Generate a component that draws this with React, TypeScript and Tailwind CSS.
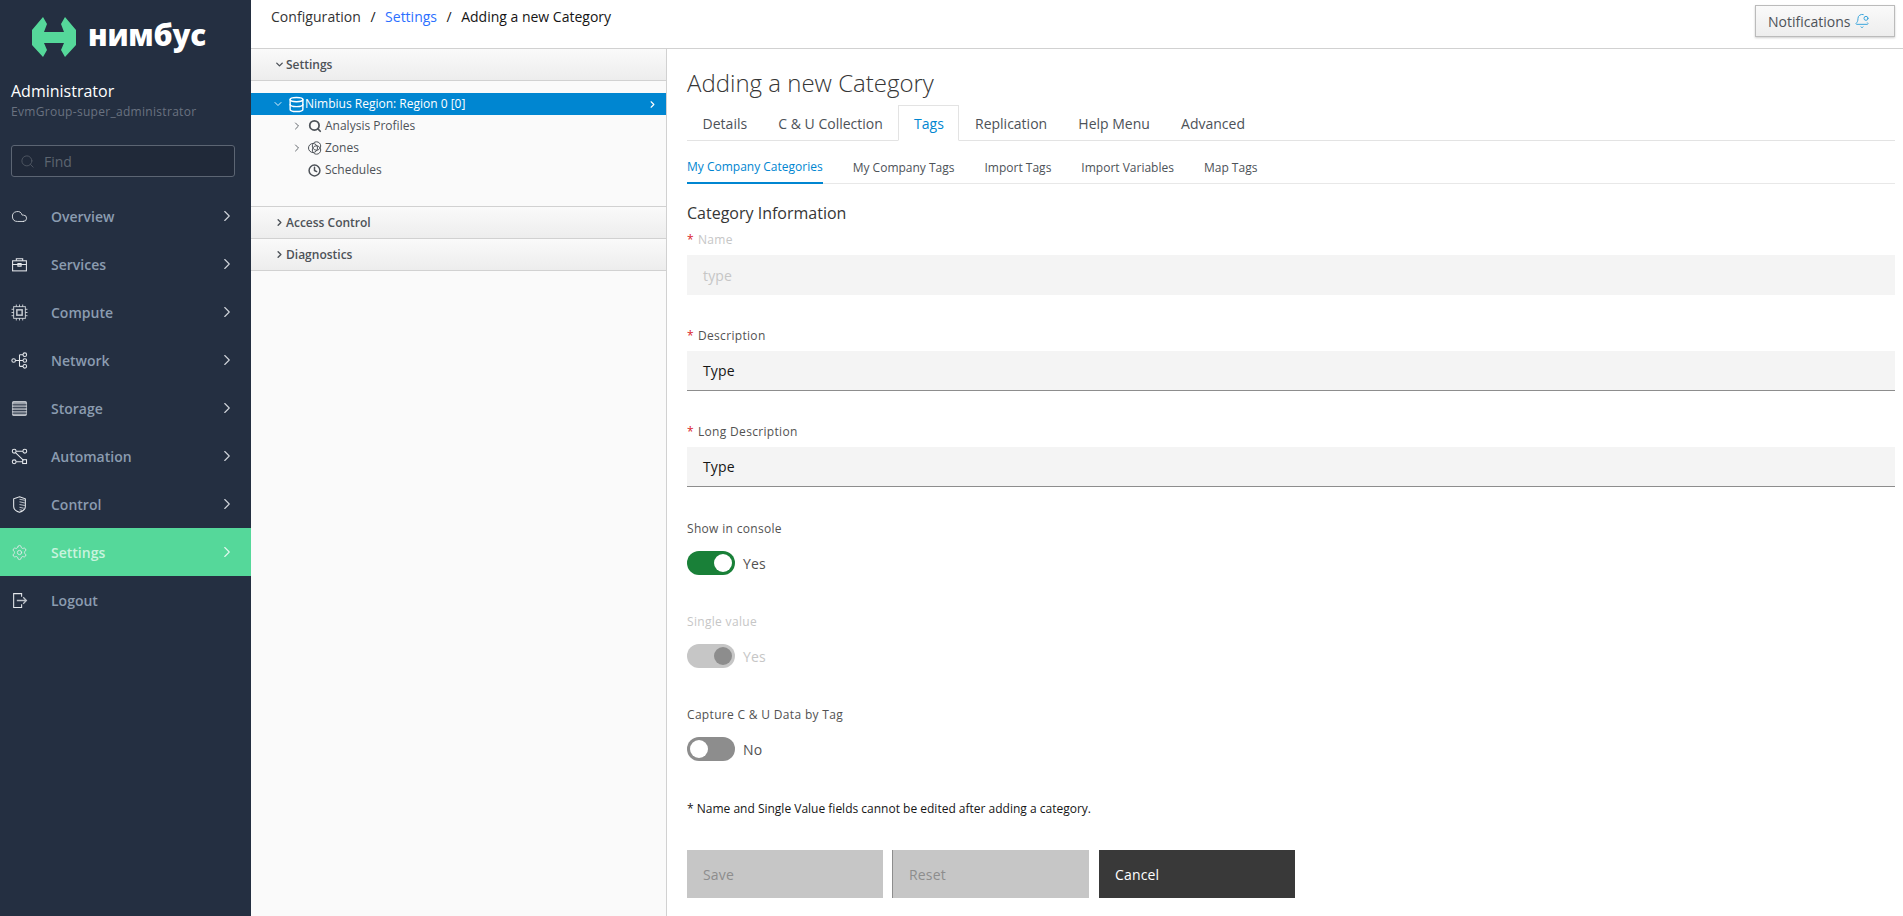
import { BellDot, ChevronDown, ChevronRight, Clock, Cloud, Database, Search, Settings } from 'lucide-react';

const iconClass = 'w-[17px] h-[17px]';

function ServicesIcon() {
  return (
    <svg viewBox="0 0 16 16" className={iconClass} fill="none" stroke="currentColor" strokeWidth="1">
      <rect x="1.5" y="4.5" width="13" height="9.5" />
      <path d="M1.5 8h13M5 4.5V2.5h6v2M6.5 7h3v2.5h-3z" />
    </svg>
  );
}

function ComputeIcon() {
  return (
    <svg viewBox="0 0 16 16" className={iconClass} fill="none" stroke="currentColor" strokeWidth="0.9" strokeOpacity="0.85">
      <rect x="2.5" y="2.5" width="11" height="11" />
      <rect x="5.5" y="5.5" width="5" height="5" strokeWidth="1.4" />
      <path d="M5 .5v2M8 .5v2M11 .5v2M5 13.5v2M8 13.5v2M11 13.5v2M.5 5h2M.5 8h2M.5 11h2M13.5 5h2M13.5 8h2M13.5 11h2" />
    </svg>
  );
}

function NetworkIcon() {
  return (
    <svg viewBox="0 0 16 16" className={iconClass} fill="none" stroke="currentColor" strokeWidth="1">
      <circle cx="2.5" cy="8" r="1.7" />
      <circle cx="13" cy="2.5" r="1.7" />
      <circle cx="13" cy="8" r="1.7" />
      <circle cx="13" cy="13.5" r="1.7" />
      <path d="M4.2 8h7.1M8 2.5v11M8 2.5h3.3M8 13.5h3.3" />
    </svg>
  );
}

function StorageIcon() {
  return (
    <svg viewBox="0 0 16 16" className={iconClass} fill="none" stroke="currentColor" strokeWidth="1.2">
      <rect x="1.5" y="1.5" width="13" height="13" rx="1" fill="currentColor" fillOpacity="0.6" strokeOpacity="0.7" />
      <path d="M1.5 4.5h13M1.5 7.2h13M1.5 9.9h13M1.5 12.4h13" stroke="#242f41" strokeWidth="0.8" />
    </svg>
  );
}

function AutomationIcon() {
  return (
    <svg viewBox="0 0 16 16" className={iconClass} fill="none" stroke="currentColor" strokeWidth="1">
      <circle cx="3" cy="3" r="1.8" />
      <circle cx="3" cy="13" r="1.8" />
      <circle cx="13" cy="3" r="1.8" />
      <rect x="11" y="11" width="3.6" height="3.6" />
      <path d="M4.8 3h6.4M4.8 13h6.2M4.2 4.3l7.6 7.4" />
    </svg>
  );
}

function ControlIcon() {
  return (
    <svg viewBox="0 0 16 16" className={iconClass} fill="none" stroke="currentColor" strokeWidth="1">
      <path d="M8 .8l5.5 1.8v7.2c0 2.7-2.5 4.6-5.5 5.6-3-1-5.5-2.9-5.5-5.6V2.6z" />
      <path d="M8 3l5 1M8 5.5l5 1M8 8l5 1M8 10.5l4 1M8 13l2.5 .5" strokeOpacity="0.75" />
    </svg>
  );
}

function LogoutIcon() {
  return (
    <svg viewBox="0 0 16 16" className={iconClass} fill="none" stroke="currentColor" strokeWidth="1">
      <path d="M10 4.5V1.5H2.5v13H10v-3" />
      <path d="M5.5 8h9M11.5 5l3 3-3 3" strokeOpacity="0.8" strokeWidth="1.2" />
    </svg>
  );
}

function ZonesIcon() {
  return (
    <svg viewBox="0 0 14 14" className="w-[14px] h-[14px]" fill="none" stroke="currentColor" strokeWidth="1">
      <circle cx="5" cy="7" r="4.5" />
      <circle cx="8.5" cy="5" r="4.2" />
      <circle cx="8.5" cy="9" r="4.2" />
    </svg>
  );
}

const menuItems = [
  { label: 'Overview', icon: <Cloud className={iconClass} strokeWidth={1.25} /> },
  { label: 'Services', icon: <ServicesIcon /> },
  { label: 'Compute', icon: <ComputeIcon /> },
  { label: 'Network', icon: <NetworkIcon /> },
  { label: 'Storage', icon: <StorageIcon /> },
  { label: 'Automation', icon: <AutomationIcon /> },
  { label: 'Control', icon: <ControlIcon /> },
  { label: 'Settings', icon: <Settings className={iconClass} strokeWidth={1.25} />, active: true },
  { label: 'Logout', icon: <LogoutIcon />, noArrow: true },
];

function Sidebar() {
  return (
    <aside className="w-[251px] shrink-0 bg-[#242f41] flex flex-col">
      <div className="h-[70px] flex items-center pl-[32px] pt-[3px]">
        <svg viewBox="0 0 44 40" className="w-[44px] h-[40px] shrink-0 fill-[#55d89a]">
          <path d="M11 0L0 13v15l11 12 4-7-3-7h20l-3 7 4 7 11-12V13L33 0l-4 7 3 8H12l3-8z" />
        </svg>
        <span className="ml-[12px] text-white text-[29.5px] font-extrabold leading-none tracking-[-0.2px] pb-[3px]">нимбус</span>
      </div>
      <div className="pl-[11px] mt-[10px]">
        <div className="text-white text-[16px] leading-[22px]">Administrator</div>
        <div className="text-[#6a7280] text-[12px] leading-[18px] mt-[1px] tracking-[0.3px]">EvmGroup-super_administrator</div>
      </div>
      <div className="mx-[11px] w-[224px] mt-[24px] h-[32px] flex items-center border border-[#5c6573] rounded-[3px] bg-[#202939] pl-[8px]">
        <Search className="w-[15px] h-[15px] text-[#4f5662]" strokeWidth={1.5} />
        <span className="ml-[9px] text-[14px] text-[#5d6570]">Find</span>
      </div>
      <nav className="mt-[15px]">
        {menuItems.map((item) => (
          <div
            key={item.label}
            className={`h-[48px] flex items-center pl-[11px] pr-[15px] ${item.active ? 'bg-[#55d89a]' : ''}`}
          >
            <span className="w-[40px] flex text-[#e4e7eb]">{item.icon}</span>
            <span className={`flex-1 text-[14px] font-semibold ${item.active ? 'text-[#c8f3de]' : 'text-[#8b9cb0]'}`}>
              {item.label}
            </span>
            {!item.noArrow && (
              <ChevronRight className={`w-[18px] h-[18px] ${item.active ? 'text-[#e3f8ee]' : 'text-[#d0d4da]'}`} strokeWidth={1.5} />
            )}
          </div>
        ))}
      </nav>
    </aside>
  );
}

function AccordionHeader({ label, open }: { label: string; open?: boolean }) {
  return (
    <div className="h-[32px] flex items-center border-b border-[#d1d1d1] bg-gradient-to-b from-[#fafafa] to-[#ededed] pl-[23px] text-[12px] font-semibold text-[#4d5258]">
      {open ? (
        <ChevronDown className="w-[11px] h-[11px]" strokeWidth={3} />
      ) : (
        <ChevronRight className="w-[11px] h-[11px]" strokeWidth={3} />
      )}
      <span className="ml-[1px]">{label}</span>
    </div>
  );
}

function TreeRow({ label, icon, arrow }: { label: string; icon: React.ReactNode; arrow?: boolean }) {
  return (
    <div className="h-[22px] flex items-center text-[12px] text-[#4d5258]">
      <span className="w-[41px] pl-[24px] flex">
        {arrow && <ChevronRight className="w-[12px] h-[12px]" strokeWidth={1.75} />}
      </span>
      <span className="w-[17px] flex">{icon}</span>
      <span>{label}</span>
    </div>
  );
}

function TreePane() {
  return (
    <div className="w-[416px] shrink-0 bg-[#fafafa] border-r border-[#d1d1d1]">
      <AccordionHeader label="Settings" open />
      <div className="h-[126px] border-b border-[#d1d1d1] pt-[12px]">
        <div className="h-[22px] bg-[#0086d1] flex items-center text-white text-[12px] pl-[21px] pr-[8px]">
          <ChevronDown className="w-[12px] h-[12px] mr-[4px]" strokeWidth={1.75} />
          <Database className="w-[17px] h-[17px]" strokeWidth={2} />
          <span className="flex-1">Nimbius Region: Region 0 [0]</span>
          <ChevronRight className="w-[11px] h-[11px]" strokeWidth={2.5} />
        </div>
        <div className="pl-[16px]">
          <TreeRow label="Analysis Profiles" arrow icon={<Search className="w-[14px] h-[14px]" strokeWidth={3} />} />
          <TreeRow label="Zones" arrow icon={<ZonesIcon />} />
          <TreeRow label="Schedules" icon={<Clock className="w-[13px] h-[13px]" strokeWidth={2.75} />} />
        </div>
      </div>
      <AccordionHeader label="Access Control" />
      <AccordionHeader label="Diagnostics" />
    </div>
  );
}

const tabs = ['Details', 'C & U Collection', 'Tags', 'Replication', 'Help Menu', 'Advanced'];
const subTabs = ['My Company Categories', 'My Company Tags', 'Import Tags', 'Import Variables', 'Map Tags'];

function Field({ label, value, disabled }: { label: string; value: string; disabled?: boolean }) {
  return (
    <div className="mb-[33px]">
      <div className={`h-[15px] flex items-center text-[12px] tracking-[0.32px] ${disabled ? 'text-[#c6c6c6]' : 'text-[#525252]'}`}>
        <span className="w-[11px] text-[#da1e28]">*</span>
        {label}
      </div>
      <div
        className={`mt-[8px] h-[40px] bg-[#f4f4f4] flex items-center pl-[16px] text-[14px] tracking-[0.16px] ${
          disabled ? 'text-[#c6c6c6]' : 'text-[#161616] border-b border-[#8d8d8d]'
        }`}
      >
        {value}
      </div>
    </div>
  );
}

function Toggle({ label, value, on, disabled }: { label: string; value: string; on?: boolean; disabled?: boolean }) {
  const track = disabled ? 'bg-[#c6c6c6]' : on ? 'bg-[#198038]' : 'bg-[#8d8d8d]';
  const knob = disabled ? 'bg-[#8d8d8d]' : 'bg-white';
  return (
    <div className="h-[93px]">
      <div className={`h-[17px] flex items-center text-[12px] tracking-[0.32px] ${disabled ? 'text-[#c6c6c6]' : 'text-[#525252]'}`}>{label}</div>
      <div className="mt-[14px] flex items-center">
        <span className={`w-[48px] h-[24px] rounded-full flex items-center px-[3px] ${track} ${on ? 'justify-end' : ''}`}>
          <span className={`w-[18px] h-[18px] rounded-full ${knob}`} />
        </span>
        <span className={`ml-[8px] text-[14px] tracking-[0.16px] ${disabled ? 'text-[#c6c6c6]' : 'text-[#525252]'}`}>{value}</span>
      </div>
    </div>
  );
}

function Content() {
  return (
    <div className="flex-1 min-w-0 pl-[20px] pr-[8px]">
      <h1 className="h-[56px] flex items-end pb-[6px] text-[24px] font-light leading-[32px] text-[#363636] pt-[12px]">Adding a new Category</h1>
      <div className="flex h-[36px] border-b border-[#e3e3e3]">
        {tabs.map((tab) => (
          <div
            key={tab}
            className={`h-[36px] px-[14.6px] flex items-center border text-[14px] ${
              tab === 'Tags' ? 'border-[#e3e3e3] border-b-white text-[#0086d1] bg-white' : 'border-transparent text-[#4d5258]'
            }`}
          >
            {tab}
          </div>
        ))}
      </div>
      <div className="flex gap-[30px] h-[43px] border-b border-[#e8e8e8] text-[12px] text-[#4d5258]">
        {subTabs.map((tab, i) => (
          <div
            key={tab}
            className={`h-[43px] pt-[10px] flex items-center ${i === 0 ? 'text-[#0086d1] border-b-2 border-[#0086d1]' : ''}`}
          >
            {tab}
          </div>
        ))}
      </div>
      <h2 className="mt-[18px] h-[22px] flex items-center text-[16px] text-[#363636]">Category Information</h2>
      <div className="mt-[8px]">
        <Field label="Name" value="type" disabled />
        <Field label="Description" value="Type" />
        <Field label="Long Description" value="Type" />
      </div>
      <Toggle label="Show in console" value="Yes" on />
      <Toggle label="Single value" value="Yes" on disabled />
      <Toggle label="Capture C & U Data by Tag" value="No" />
      <p className="h-[17px] flex items-center text-[12px] text-[#161616] mt-[1px]">
        * Name and Single Value fields cannot be edited after adding a category.
      </p>
      <div className="mt-[33px] flex tracking-[0.16px]">
        <div className="w-[196px] h-[48px] bg-[#c6c6c6] text-[#8d8d8d] text-[14px] flex items-center pl-[16px]">Save</div>
        <div className="ml-[9px] w-[197px] h-[48px] bg-[#c6c6c6] text-[#8d8d8d] text-[14px] flex items-center pl-[16px] border-l border-[#8d8d8d]">
          Reset
        </div>
        <div className="ml-[10px] w-[196px] h-[48px] bg-[#393939] text-white text-[14px] flex items-center pl-[16px]">Cancel</div>
      </div>
    </div>
  );
}

export default function App() {
  return (
    <div className="flex h-screen overflow-hidden bg-white font-['Open_Sans',sans-serif]">
      <Sidebar />
      <div className="flex-1 min-w-0 flex flex-col">
        <header className="h-[49px] shrink-0 border-b border-[#d1d1d1] flex pl-[20px] pr-[8px]">
          <div className="flex-1 flex gap-[9.5px] pt-[7px] text-[14px] leading-[20px] text-[#151515]">
            <span className="text-[#333] tracking-[0.05px]">Configuration</span>
            <span>/</span>
            <span className="text-[#2b6fff]">Settings</span>
            <span>/</span>
            <span>Adding a new Category</span>
          </div>
          <button className="mt-[5px] w-[140px] h-[32px] border border-[#bbb] bg-gradient-to-b from-[#fafafa] to-[#ededed] shadow-[0_1px_2px_rgba(0,0,0,0.2)] flex items-center pl-[12px] gap-[4px] text-[14px] text-[#4d5258]">
            Notifications
            <BellDot className="w-[16px] h-[16px] text-[#39a5dc]" strokeWidth={1.5} />
          </button>
        </header>
        <div className="flex-1 flex min-h-0">
          <TreePane />
          <Content />
        </div>
      </div>
    </div>
  );
}
